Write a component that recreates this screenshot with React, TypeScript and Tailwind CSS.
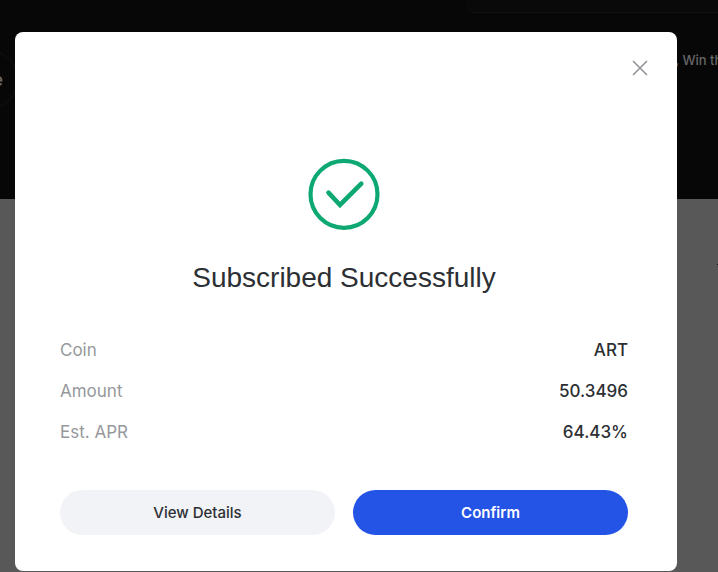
import { useState } from "react";

interface Row {
  label: string;
  value: string;
}

const ROWS: Row[] = [
  { label: "Coin", value: "ART" },
  { label: "Amount", value: "50.3496" },
  { label: "Est. APR", value: "64.43%" },
];

function CloseIcon() {
  return (
    <svg viewBox="0 0 16 16" className="size-4" fill="none" stroke="#929498" strokeWidth="1.6">
      <path d="M1 1 15 15M15 1 1 15" />
    </svg>
  );
}

function SuccessIcon() {
  return (
    <svg
      viewBox="0 0 72 72"
      className="size-[72px]"
      fill="none"
      stroke="#0ea872"
      aria-hidden="true"
    >
      <circle cx="36" cy="36.3" r="33.5" strokeWidth="4.2" />
      <path d="M20.5 34.6 32 47 53.3 25.7" strokeWidth="4.6" strokeLinecap="round" />
    </svg>
  );
}

// Dimmed page that shows around the dialog
function PageBehind() {
  return (
    <div className="flex min-h-screen flex-col overflow-hidden bg-[#585858]" aria-hidden="true">
      <div className="h-[199px] bg-[#070707]">
        <div className="flex h-[50px] justify-end">
          <div className="h-[13px] w-[252px] rounded-bl-lg border-b border-[#101010] bg-[#090909]" />
        </div>
        <div className="flex items-start justify-between">
          <div className="-ml-12 flex h-[59px] w-[66px] items-center justify-end rounded-full border border-[#121212] pr-[14px] text-lg font-medium text-[#6a6a6a]">
            e
          </div>
          <p className="-mr-3 whitespace-nowrap text-[13px] leading-5 font-medium text-[#666]">
            Trade, Win the
          </p>
        </div>
      </div>
      <div className="flex justify-end pt-[65px]">
        <span className="h-px w-px bg-[#111]" />
      </div>
    </div>
  );
}

function SubscribedDialog({ onClose }: { onClose: () => void }) {
  return (
    <div
      role="dialog"
      aria-modal="true"
      aria-labelledby="dialog-title"
      className="w-full rounded-lg bg-white pr-[49px] pb-9 pl-[45px] text-[#2c2f33]"
    >
      <div className="-mr-6 flex justify-end pt-6">
        <button
          type="button"
          aria-label="Close"
          onClick={onClose}
          className="flex size-6 items-center justify-center"
        >
          <CloseIcon />
        </button>
      </div>

      <div className="flex flex-col items-center pt-[78px]">
        <SuccessIcon />
        <h1
          id="dialog-title"
          className="pt-7 font-['Liberation_Sans',sans-serif] text-[28px] leading-10"
        >
          Subscribed Successfully
        </h1>
      </div>

      <dl className="space-y-[17px] pt-10 text-[17px] leading-6">
        {ROWS.map((row) => (
          <div key={row.label} className="flex justify-between">
            <dt className="text-[#96989c]">{row.label}</dt>
            <dd className="font-medium">{row.value}</dd>
          </div>
        ))}
      </dl>

      <div className="grid grid-cols-2 gap-[18px] pt-[46px] text-[15px]">
        <button type="button" className="h-[45px] rounded-full bg-[#f1f3f7] pt-0.5 font-medium">
          View Details
        </button>
        <button
          type="button"
          onClick={onClose}
          className="h-[45px] rounded-full bg-[#2354e6] pt-0.5 font-semibold text-white"
        >
          Confirm
        </button>
      </div>
    </div>
  );
}

export default function App() {
  const [open, setOpen] = useState(true);

  return (
    <div className="relative min-h-screen overflow-hidden font-['Inter','Liberation_Sans',sans-serif]">
      <PageBehind />
      {open && (
        <div className="absolute inset-0 flex items-start pt-8 pr-[41px] pl-[15px]">
          <SubscribedDialog onClose={() => setOpen(false)} />
        </div>
      )}
    </div>
  );
}
